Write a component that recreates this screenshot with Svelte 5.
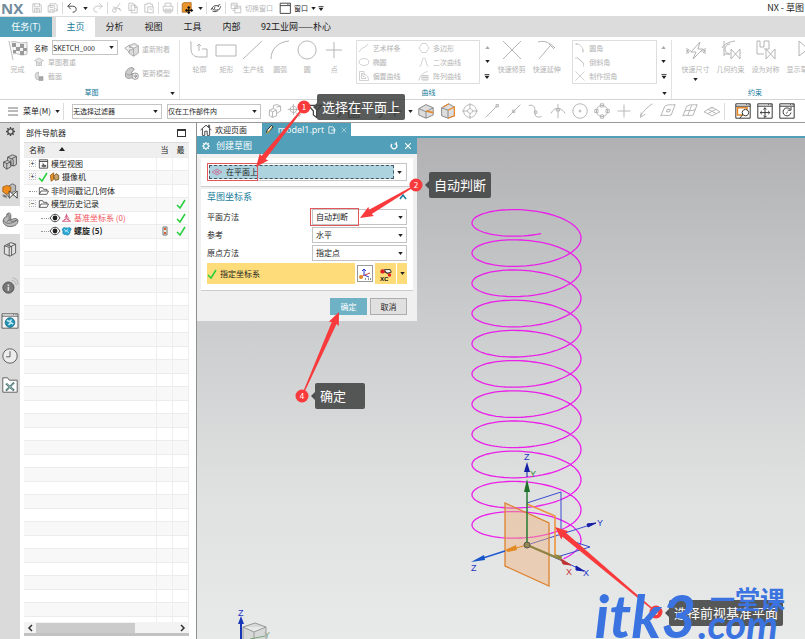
<script lang="ts">
	interface TreeRow {
		label: string;
		level: number;
		kind: string;
		expander?: string;
		checked?: boolean;
		visible?: boolean;
		latest?: boolean;
		mark?: boolean;
	}

	const tabs = ['主页', '分析', '视图', '工具', '内部', '92工业网——朴心'];
	let activeTab = $state('主页');

	const drawTools = [
		{ label: '轮廓', icon: 'profile' },
		{ label: '矩形', icon: 'rect' },
		{ label: '生产线', icon: 'line' },
		{ label: '圆弧', icon: 'arc' },
		{ label: '圆', icon: 'circle' },
		{ label: '点', icon: 'point' }
	];
	const curveTools = [
		{ label: '艺术样条', icon: 'spline' },
		{ label: '多边形', icon: 'polygon' },
		{ label: '椭圆', icon: 'ellipse' },
		{ label: '二次曲线', icon: 'conic' },
		{ label: '偏置曲线', icon: 'offset' },
		{ label: '阵列曲线', icon: 'pattern' }
	];
	const editTools = [
		{ label: '快速修剪', icon: 'trim' },
		{ label: '快速延伸', icon: 'extend' }
	];
	const cornerTools = [
		{ label: '圆角', icon: 'fillet' },
		{ label: '倒斜角', icon: 'chamfer' },
		{ label: '制作拐角', icon: 'corner' }
	];
	const constraintTools = [
		{ label: '快速尺寸', icon: 'dimension' },
		{ label: '几何约束', icon: 'constraint' },
		{ label: '设为对称', icon: 'symmetric' },
		{ label: '显示草图', icon: 'show' }
	];
	const selectionTools = ['solid', 'snap', 'filter', 'undoSel', 'list', 'rotate', 'origin'];
	const snapTools = [
		'target', 'lineEnd', 'lineMid', 'curveEnd', 'intersect', 'center',
		'quadrant', 'point', 'tangent', 'face', 'faceGrid', 'grid'
	];
	const railIcons = ['gear', 'blocks', 'orange', 'part', 'library', 'info', 'web', 'clock', 'toolbox'];

	const rows: TreeRow[] = [
		{ label: '模型视图', level: 0, kind: 'views', expander: '+' },
		{ label: '摄像机', level: 0, kind: 'camera', expander: '+', checked: true },
		{ label: '非时间戳记几何体', level: 0, kind: 'folder' },
		{ label: '模型历史记录', level: 0, kind: 'folder', expander: '−', latest: true },
		{ label: '基准坐标系 (0)', level: 1, kind: 'csys', visible: true, latest: true },
		{ label: '螺旋 (5)', level: 1, kind: 'helix', visible: true, latest: true, mark: true }
	];
	const blankRows = Array.from({ length: 30 });

	let sketchType = $state('在平面上');
	let planeMethod = $state('自动判断');
	let reference = $state('水平');
	let originMethod = $state('指定点');

	// outline icons on a 20 unit grid
	const paths: Record<string, string> = {
		save: 'M3 3h12l2 2v12H3zM6 3v5h8V3M6 17v-6h8v6M8 13h4M8 15h4',
		saveAll: 'M2 6h10v11H2zM5 6V3h10l2 2v10h-4M5 6v3h5M5 17v-4h5v4M14 11l4 3',
		undo: 'M8 2L3 7l5 5M3 7h8c4 0 6 2 6 5s-2 5-6 5',
		redo: 'M12 2l5 5-5 5M17 7H9c-4 0-6 2-6 5s2 5 6 5',
		cut: 'M15 2L7 13M3 8l13 4M5 11a3 3 0 1 0 1 6 3 3 0 0 0-1-6M15 10a2 2 0 1 0 2 4',
		copy: 'M3 2h7l3 3v9H3zM7 5h7l3 3v10H7zM13 5v4h4',
		paste: 'M3 4h4V2h6v2h3v4M3 4v13h4M8 8h9v10H8zM11 12h4',
		print: 'M5 7V2h10v5M2 7h16v8H2zM5 12h10v6H5zM7 15h6',
		eye: 'M2 13c2-7 9-9 13-5M4 15c6 3 12-1 14-8M9 8a3 3 0 1 0 4 4M3 10l4 4M13 6l4-2',
		windows: 'M2 2h10v9H2zM8 7h10v11H8zM2 5h10M8 10h10M4 14h3',
		window: 'M2 2h17v17H2zM2 6h17M14 4h1M16 4h1',
		profile: 'M2 2v7c0 6 4 8 8 8h8v-8h-5M10 11V4M8 6l2-2 2 2M2 2H1',
		rect: 'M0 5h20v11H0z',
		line: 'M0 19L19 1',
		arc: 'M1 19C1 9 8 2 19 1',
		circle: 'M10 1a9 9 0 1 0 .1 0',
		point: 'M10 2v16M2 10h16',
		spline: 'M0 18l4-5c2-5 5-2 8-5l6-6',
		polygon: 'M6 1h8l6 9-6 9H6l-6-9z',
		ellipse: 'M10 3c13 0 13 14 0 14S-3 3 10 3',
		conic: 'M1 19c5 0 4-17 9-17s4 17 9 17',
		offset: 'M1 1h9v6c5 0 9 3 9 12H1zM5 5v10h9c0-3-3-4-6-4V5z',
		pattern: 'M0 19C1 10 7 4 17 1M6 9h12v9H6zM10 8v11M14 8v11M5 13h14',
		trim: 'M1 1l18 18M19 1L1 19',
		extend: 'M1 2c7-2 12 1 17 6M13 6L2 19M12 4l5 5',
		fillet: 'M1 2c10-1 15 7 15 16M1 2h5M16 12v7',
		chamfer: 'M0 2h6l11 10v7M5 2l12 11',
		corner: 'M1 1l18 18M19 1L1 19',
		dimension: 'M1 8v6M19 8v6M1 11h4M15 11h4M3 9l-2 2 2 2M17 9l2 2-2 2M14 2L5 12h5l-3 7 10-10h-5z',
		constraint: 'M1 8C3 4 8 2 14 1M3 1v15M3 14h6M9 4a5 5 0 0 0 0 10M10 9v10l9-10v10z',
		symmetric: 'M1 1h3v6h4V1h5v8H8M1 1v13h7M10 9v10l9-10v10z',
		show: 'M8 1v15l9-7z',
		solid: 'M3 9l5-2 4 2v7l-5 2-4-2zM8 7V3l5-1 4 2v6l-5 3M3 9l4 2 5-2M7 11v7M12 5l5-1',
		snap: 'M8 1v14M1 8h14M8 4a4 4 0 1 0 .1 0M11 12l5 5M14 17l4-4',
		filter: 'M2 3h16l-6 7v8l-4-3v-5z',
		undoSel: 'M4 3v6h6M4 9c4-6 12-4 13 3 0 3-2 5-4 6',
		list: 'M2 4h13v14H2zM5 8h1M8 8h5M5 12h1M8 12h5M5 15h8M2 6h13',
		rotate: 'M2 4l4-2M3 6h10M10 3l3 3-3 3M14 10c7 2 5 8 0 8M14 10l3-2M14 10l2 3',
		origin: 'M10 2v15M2 10h16M8 8h4v4H8z',
		target: 'M10 2a8 8 0 1 0 .1 0M10 7a3 3 0 1 0 .1 0M10 0v7M10 13v7M0 10h7M13 10h7',
		lineEnd: 'M2 18L17 3M15 2h3v3h-3z',
		lineMid: 'M2 18L18 2M8 9h3v3H8z',
		curveEnd: 'M1 3c10-2 7 8 8 12 1 3 5 3 8 2M8 10h3v3H8z',
		intersect: 'M1 13C6 4 14 5 19 13M10 1v18M8 7h4v3H8z',
		center: 'M10 1a9 9 0 1 0 .1 0M9 9h2v2H9z',
		quadrant: 'M10 3a7 7 0 1 0 .1 0M8 1h4v4H8zM8 15h4v4H8zM1 8h4v4H1zM15 8h4v4h-4z',
		tangent: 'M18 1C12 5 6 10 3 17M4 12l-1 6 6-4',
		face: 'M1 16L6 4c4-3 9-1 13-2l-5 13c-4 2-9-1-13 1zM9 8l4 0-1 3-4 0z',
		faceGrid: 'M1 16L6 4c4-3 9-1 13-2l-5 13c-4 2-9-1-13 1zM4 10c5-2 8 1 13-2M12 3L7 16',
		grid: 'M0 11l10-6 10 6-10 5zM5 8l10 5M15 8L5 13M10 5v3',
		gear: 'M9 2h2l1 3 2 1 3-1 1 3-2 2 2 2-1 3-3-1-2 1-1 3H9l-1-3-2-1-3 1-1-3 2-2-2-2 1-3 3 1 2-1zM10 7a3 3 0 1 0 .1 0',
		cog: 'M10 4a6 6 0 1 0 .1 0M10 0v4M10 16v4M0 10h4M16 10h4M3 3l3 3M14 14l3 3M17 3l-3 3M6 14l-3 3',
		home: 'M1 10l9-8 9 8M4 8v11h4v-7h4v7h4V8M14 5V2h2v5',
		refresh: 'M5 5a7 7 0 1 0 10 0M11 5h5V0',
		close: 'M3 3l14 14M17 3L3 17'
	};

	// helix of the model, projected on the view plane
	function helixPath() {
		let d = '';
		const end = Math.PI * 22 + 0.9;
		for (let t = 1.3; t < end; t += 0.08) {
			const x = 526.5 + 54.5 * Math.cos(t);
			const y = 207.8 + 20.3 * Math.sin(t) + (30.2 * t) / (2 * Math.PI);
			d += `${d ? 'L' : 'M'}${x.toFixed(1)} ${y.toFixed(1)}`;
		}
		return d;
	}

	const arrows = [
		{ from: [304, 107], to: [256, 167], n: 1 },
		{ from: [416, 185], to: [360, 218], n: 2 },
		{ from: [302, 396], to: [339, 312], n: 4 },
		{ from: [656, 612], to: [555, 527], n: 3 }
	];

	// tapered shaft with a barbed head
	function arrowPoints(from: number[], to: number[]) {
		const dx = to[0] - from[0];
		const dy = to[1] - from[1];
		const len = Math.hypot(dx, dy);
		const ux = dx / len;
		const uy = dy / len;
		const at = (back: number, side: number) =>
			`${(to[0] - ux * back - uy * side).toFixed(1)},${(to[1] - uy * back + ux * side).toFixed(1)}`;
		return [at(len, 0.6), at(12, 2.6), at(13, 5.5), at(0, 0), at(13, -5.5), at(12, -2.6), at(len, -0.6)].join(' ');
	}
</script>

{#snippet icon(name: string, cls = '')}
	<svg class="icon {cls}" viewBox="0 0 20 20" aria-hidden="true"><path d={paths[name]} /></svg>
{/snippet}

{#snippet caret()}
	<svg class="caret" viewBox="0 0 6 4" aria-hidden="true"><path d="M0 0h6L3 4z" /></svg>
{/snippet}

{#snippet tick()}
	<svg class="tick" viewBox="0 0 10 10" aria-hidden="true"><path d="M1 6l3 3 5-8" /></svg>
{/snippet}

{#snippet scroller()}
	<div class="scroller">
		<svg class="caret faint" viewBox="0 0 6 4"><path d="M0 4h6L3 0z" /></svg>
		{@render caret()}
		<svg class="caret more" viewBox="0 0 6 6"><path d="M0 0h6v1H0zM0 2h6L3 6z" /></svg>
	</div>
{/snippet}

<div class="app">
	<header class="titlebar">
		<span class="logo">NX</span>
		<button aria-label="保存">{@render icon('save')}</button>
		<button aria-label="另存">{@render icon('saveAll')}</button>
		<i class="sep"></i>
		<button aria-label="撤消">{@render icon('undo', 'dark')}</button>
		<span class="drop">{@render caret()}</span>
		<button aria-label="重做">{@render icon('redo')}</button>
		<i class="sep"></i>
		<button aria-label="剪切">{@render icon('cut')}</button>
		<button aria-label="复制">{@render icon('copy')}</button>
		<button aria-label="粘贴">{@render icon('paste')}</button>
		<i class="sep"></i>
		<button aria-label="打印">{@render icon('print')}</button>
		<i class="sep"></i>
		<button aria-label="命令">
			<svg class="icon" viewBox="0 0 20 20">
				<path d="M2 3l3-2h12v12l-3 4H2z" fill="#e9942b" stroke="#a76416" />
				<path d="M13 8v11M8 14h11M11 10l2-2 2 2M11 17l2 2 2-2M10 12l-2 2 2 2M17 12l2 2-2 2" stroke="#111" stroke-width="2" />
			</svg>
		</button>
		<span class="drop">{@render caret()}</span>
		<i class="sep"></i>
		<button aria-label="显示">{@render icon('eye', 'dark')}</button>
		<i class="sep"></i>
		<button class="wide muted">{@render icon('windows')}切换窗口</button>
		<button class="wide window">{@render icon('window', 'dark')}窗口</button>
		<span class="drop">{@render caret()}</span>
		<svg class="caret more" viewBox="0 0 6 6"><path d="M0 0h6v1H0zM0 2h6L3 6z" /></svg>
		<span class="title">NX - 草图</span>
	</header>

	<nav class="tabs">
		<button class="task">任务(T)</button>
		{#each tabs as tab}
			<button class:active={tab === activeTab} onclick={() => (activeTab = tab)}>{tab}</button>
		{/each}
	</nav>

	<section class="ribbon">
		<div class="group sketch">
			<div class="tools">
				<button class="big finish">
					<svg class="icon" viewBox="0 0 20 20">
						<path d="M1 1l4 19M3 2c5-2 8 3 16 0v12c-7 3-9-2-14 0" stroke="#bbb" fill="#f4f4f4" />
						<path d="M4 3h4v4H4zM12 4h4v4h-4zM8 7h4v4H8zM15 8h4v3h-4zM5 10h3v3H5zM12 11h4v4h-4z" fill="#9a9a9a" stroke="none" />
					</svg>
					完成
				</button>
				<div class="stack">
					<div class="name-row">
						<label for="sketch-name">名称</label>
						<span class="combo">
							<select id="sketch-name"><option>SKETCH_000</option></select>
							{@render caret()}
						</span>
					</div>
					<button class="small">
						<svg class="icon" viewBox="0 0 20 20"><path d="M1 7l9-5 9 5-9 5zM5 10v7h10v-7M8 14h5" fill="#e8e8e8" stroke="#aaa" /></svg>草图着重
					</button>
					<button class="small">
						<svg class="icon" viewBox="0 0 20 20"><path d="M9 2a8 8 0 1 0 9 9h-9z" fill="#ddd" stroke="#aaa" /><path d="M10 12h8v7h-8z" fill="#aaa" stroke="#999" /></svg>截面
					</button>
				</div>
				<div class="stack models">
					<button class="medium">
						<svg class="icon" viewBox="0 0 20 20"><path d="M6 6l7-3 5 3v9l-6 4-6-4zM6 6l6 3 6-3M12 9v10" fill="#ddd" stroke="#aaa" /><path d="M1 9l6-4v3h4v3H7v3z" fill="#eee" stroke="#aaa" /></svg>重新附着
					</button>
					<button class="medium">
						<svg class="icon" viewBox="0 0 20 20"><path d="M2 11c0-4 3-7 8-8l3 2-4 5 5 2c-2 5-9 6-12 3z" fill="#ccc" stroke="#999" /><path d="M3 11c2 2 5 2 8 0" stroke="#999" /><circle cx="14" cy="14" r="4" fill="#eee" stroke="#999" /><path d="M12 14h4M14 12l2 2-2 2" stroke="#888" /></svg>更新模型
					</button>
				</div>
			</div>
			<footer>草图<span class="launcher">{@render caret()}</span></footer>
		</div>

		<div class="group curves">
			<div class="tools">
				{#each drawTools as tool}
					<button class="big">{@render icon(tool.icon)}{tool.label}</button>
				{/each}
				<div class="gallery two">
					{#each curveTools as tool}
						<button class="small">{@render icon(tool.icon)}{tool.label}</button>
					{/each}
				</div>
				{@render scroller()}
				{#each editTools as tool}
					<button class="big broad">{@render icon(tool.icon)}{tool.label}</button>
				{/each}
				<div class="gallery">
					{#each cornerTools as tool}
						<button class="small">{@render icon(tool.icon)}{tool.label}</button>
					{/each}
				</div>
				{@render scroller()}
			</div>
			<footer>曲线<span class="launcher">{@render caret()}</span></footer>
		</div>

		<div class="group constraints">
			<div class="tools">
				{#each constraintTools as tool, i}
					<button class="big broad">
						{@render icon(tool.icon)}{tool.label}
						{#if i === 0}{@render caret()}{/if}
					</button>
				{/each}
			</div>
			<footer>约束</footer>
		</div>
	</section>

	<section class="toolbar">
		<button class="menu">
			<svg class="burger" viewBox="0 0 10 9"><path d="M0 1h10M0 4h10M0 8h10" /></svg>菜单(M){@render caret()}
		</button>
		<i class="sep"></i>
		<span class="combo filter">
			<select aria-label="选择过滤器"><option>无选择过滤器</option></select>
			{@render caret()}
		</span>
		<span class="combo scope">
			<select aria-label="选择范围"><option>仅在工作部件内</option></select>
			{@render caret()}
		</span>
		<div class="icons selection">
			{#each selectionTools as name, i}
				<button aria-label={name}>{@render icon(name, i > 1 ? 'dark' : '')}</button>
			{/each}
			<span class="drop">{@render caret()}</span>
		</div>
		<button class="cube" aria-label="实体">
			<svg class="icon" viewBox="0 0 20 20">
				<path d="M1 7l9-5 9 4v9l-9 4-9-4z" fill="#ddd" stroke="#888" />
				<path d="M1 7l9 4 9-5M10 11v8" stroke="#888" /><path d="M10 10l9 2" stroke="#e8872b" stroke-width="2" />
			</svg>
		</button>
		<button class="cube" aria-label="面">
			<svg class="icon" viewBox="0 0 20 20">
				<path d="M2 6l9-5 7 4v11l-8 3-8-3z" fill="#ddd" stroke="#888" />
				<path d="M2 6l8 3v10" stroke="#888" /><path d="M10 9l8-4v11l-8 3M4 5l7-4" stroke="#e8872b" stroke-width="1.5" />
			</svg>
		</button>
		<div class="icons">
			{#each snapTools as name}
				<button aria-label={name}>{@render icon(name)}</button>
			{/each}
		</div>
		<i class="sep"></i>
		<div class="icons views">
			<button aria-label="缩放窗口">
				<svg class="icon" viewBox="0 0 20 20">
					<path d="M1 1h18v18H1zM1 4h18M14 2h1M17 2h1" stroke="#333" /><path d="M3 6h12v9H3z" stroke="#e8872b" stroke-width="2" />
					<path d="M13 8a4 4 0 1 0 .1 0M10 14l-4 5" stroke="#333" fill="#fff" />
				</svg>
			</button>
			<button aria-label="平移">
				<svg class="icon" viewBox="0 0 20 20">
					<path d="M1 1h18v18H1zM1 4h18M14 2h1M17 2h1M10 6v12M4 12h12M8 8l2-2 2 2M8 16l2 2 2-2M6 10l-2 2 2 2M14 10l2 2-2 2" stroke="#333" />
				</svg>
			</button>
			<button aria-label="旋转">
				<svg class="icon" viewBox="0 0 20 20">
					<path d="M1 1h18v18H1zM1 4h18M14 2h1M17 2h1M14 8a5 5 0 1 0 1 4M15 5v4h-4M9 13l2-2" stroke="#333" />
				</svg>
			</button>
		</div>
	</section>

	<main>
		<aside class="rail">
			{#each railIcons as name}
				<button class={name} class:current={name === 'part'} aria-label={name}>
					{#if name === 'gear'}
						{@render icon('cog', 'dark')}
					{:else}
						<svg class="icon" viewBox="0 0 20 20">
							{#if name === 'blocks'}
								<path d="M2 10l5-2 4 2v6l-5 3-4-3zM7 8V4l6-3 5 2v10l-3 2-4-1V7" fill="#c9c9c9" stroke="#444" />
								<path d="M2 10l4 2 5-2M6 12v7M7 4l5 2 6-3M12 6l2 1v8" stroke="#444" />
							{:else if name === 'orange'}
								<path d="M8 4l5-3 4 2v7l-5 2M4 13l4 4 4-2" fill="#bbb" stroke="#555" />
								<path d="M1 5l5-2 5 2v6l-5 3-5-3z" fill="#ef8c1c" stroke="#a35c10" />
								<path d="M1 14l5 2v3l-5-2z" fill="#666" /><path d="M9 10v9l10-9v9z" fill="#fff" stroke="#222" />
							{:else if name === 'part'}
								<path d="M2 9c1-3 3-3 4-3V3c2-3 5-2 5 1v6c5-3 9-2 9 1 0 5-6 8-12 7-5-1-8-5-6-9z" fill="#b9b9b9" stroke="#555" />
								<path d="M6 3c3-1 3 2 3 7l-3 2M2 10c1 5 9 6 17 0M9 10l4 2 6-2" stroke="#666" />
							{:else if name === 'library'}
								<path d="M3 6l8-4 6 2v11l-7 4-7-3z" fill="#e2e2e2" stroke="#444" />
								<path d="M3 6l6 2 8-4M9 8v11M6 5l6 2v11M9 3v3" stroke="#444" />
							{:else if name === 'info'}
								<circle cx="8" cy="12" r="7" fill="#777" stroke="#444" />
								<path d="M8 8v2M8 11v5" stroke="#ddd" stroke-width="2" /><path d="M12 3c4 0 5 3 6 6M13 0c5 0 7 4 7 8" stroke="#aaa" />
							{:else if name === 'web'}
								<path d="M0 1h20v18H0zM0 4h20M14 2h1M17 2h1" fill="#f4f4f4" stroke="#444" />
								<circle cx="10" cy="12" r="6" fill="#2492b4" stroke="#146983" />
								<path d="M6 9l4 2 2-3M8 15l3-3 3 2" stroke="#bfe9f3" stroke-width="2" />
							{:else if name === 'clock'}
								<circle cx="10" cy="10" r="9" fill="#ececec" stroke="#444" /><path d="M10 4v7H5" stroke="#444" />
							{:else}
								<path d="M1 1h6l2 3h10v15H1z" fill="#fff" stroke="#444" />
								<path d="M5 8l10 9M15 7L5 17" stroke="#3b6967" stroke-width="2.5" /><path d="M5 8l9 8M14 8l-8 8" stroke="#b9d6d1" />
							{/if}
						</svg>
					{/if}
				</button>
			{/each}
		</aside>

		<section class="navigator">
			<h2>部件导航器<button class="max" aria-label="最大化"></button></h2>
			<div class="tree">
				<table>
					<thead>
						<tr>
							<th>名称<svg class="sort" viewBox="0 0 6 4"><path d="M0 4h6L3 0z" /></svg></th>
							<th class="col">当</th>
							<th class="col">最</th>
						</tr>
					</thead>
					<tbody>
						{#each rows as row}
							<tr>
								<td>
									<div class="node" class:child={row.level === 1}>
										<span class="expander" class:boxed={row.expander}>{row.expander ?? ''}</span>
										{#if row.checked}{@render tick()}{/if}
										{#if row.visible}
											<svg class="vis" viewBox="0 0 10 8"><path d="M0 4c3-5 7-5 10 0-3 5-7 5-10 0z" fill="#fff" stroke="#444" /><circle cx="5" cy="4" r="2.4" fill="#222" /></svg>
										{/if}
										<svg class="kind" viewBox="0 0 12 12">
											{#if row.kind === 'views'}
												<path d="M1 1h10v10H1zM1 3h10" fill="#fff" stroke="#333" /><path d="M5 4v3c-3 1-1 3 2 3 3 0 4-3 0-3z" fill="#666" />
											{:else if row.kind === 'camera'}
												<path d="M1 4l4-3v8l-3 2z" fill="#e9942b" stroke="#9a5a10" /><path d="M5 5l3-3 3 2v5l-4 1z" fill="#c8a36d" stroke="#6b4a1d" />
											{:else if row.kind === 'folder'}
												<path d="M1 10V2h4l1 2h4v2M1 10l2-4h9l-2 4z" fill="#fff" stroke="#444" />
											{:else if row.kind === 'csys'}
												<path d="M6 1v5L1 10h10L6 6M4 6l2-4 3 5M3 9l3-2 3 2" fill="none" stroke="#d2557c" />
											{:else}
												<path d="M1 4c2-4 5 0 8-2 3 0 3 3 1 4 1 4-3 6-5 4-3 1-4-2-3-3z" fill="#2ba9d6" stroke="#1280ab" /><path d="M3 4l6 4M4 7l4-3" stroke="#c4efff" fill="none" />
											{/if}
										</svg>
										<span class="text {row.kind}">{row.label}</span>
									</div>
								</td>
								<td class="col">
									{#if row.mark}
										<svg class="mark" viewBox="0 0 6 10"><path d="M1 1h4v8H1z" fill="#eee" stroke="#777" /><path d="M3 2v2M3 6v2" stroke="#d6622a" stroke-width="2" /></svg>
									{/if}
								</td>
								<td class="col">{#if row.latest}{@render tick()}{/if}</td>
							</tr>
						{/each}
						{#each blankRows as _}
							<tr><td></td><td class="col"></td><td class="col"></td></tr>
						{/each}
					</tbody>
				</table>
			</div>
			<div class="hscroll">
				<svg viewBox="0 0 6 8"><path d="M5 1L2 4l3 3" /></svg>
				<span class="track"><span class="thumb"></span></span>
				<svg viewBox="0 0 6 8"><path d="M1 1l3 3-3 3" /></svg>
			</div>
		</section>

		<section class="workspace">
			<div class="doc-tabs">
				<button class="welcome">{@render icon('home', 'dark')}欢迎页面</button>
				<button class="model">
					<svg class="icon" viewBox="0 0 20 20"><path d="M3 17l2-6L14 1l4 3-9 11z" fill="#eee" stroke="#222" stroke-width="2" /><path d="M3 18l4-1 8-12" stroke="#e8b32b" stroke-width="2" /></svg>
					<span>model1.prt</span>
					<svg class="doc" viewBox="0 0 10 10"><path d="M1 1h5l2 2v6H1zM4 5h5M7 3l2 2-2 2" /></svg>
					<svg class="doc x" viewBox="0 0 10 10"><path d="M2 2l6 6M8 2L2 8" /></svg>
				</button>
			</div>

			<div class="viewport">
				<svg class="scene" aria-hidden="true">
					<g transform="translate(-197 -138)" fill="none">
						<path d={helixPath()} stroke="#ea1fea" stroke-width="1.3" />
						<path d="M527 503L561 492V534M527 545L590 525M527 545L580 569" stroke="#3a4bd0" />
						<path d="M566 539L590 547L557 557" stroke="#3a4bd0" />
						<path d="M505 503L549 523V586L505 566z" fill="#efb078" fill-opacity=".45" stroke="#dd822f" stroke-width="1.3" />
						<path d="M527 504L555 516V557" stroke="#ee943f" stroke-width="1.6" />
						<path d="M527 545V490" stroke="#267a32" stroke-width="1.5" />
						<path d="M527 477V467" stroke="#1620a8" />
						<path d="M524 492l3-13 3 13z" fill="#1c7228" />
						<path d="M524 472l3-10 3 10z" fill="#141ea6" />
						<path d="M505 551L480 559" stroke="#1e5ad2" stroke-width="1.5" />
						<path d="M471 562l13-7 1 5z" fill="#1754c8" />
						<path d="M505 550l11-5 1 5-9 2z" fill="#e18a23" /><path d="M516 548L527 545" stroke="#e18a23" />
						<path d="M527 545L560 559" stroke="#8f8340" stroke-width="2" />
						<path d="M554 554l8 2-1 5z" fill="#8f8340" />
						<path d="M561 559l10 6-8-1z" fill="#bf3434" stroke="#bf3434" />
						<path d="M576 566l8 5-8-1z" fill="#141ea6" stroke="#141ea6" />
						<path d="M587 524l9-1-8 4z" fill="#141ea6" stroke="#141ea6" />
						<circle cx="527" cy="545" r="3" fill="#94894f" stroke="#555" />
						<g class="axis">
							<text x="524" y="460" fill="#2434c8">Z</text>
							<text x="530" y="477" fill="#2c8635">Y</text>
							<text x="597" y="526" fill="#2434c8">Y</text>
							<text x="471" y="571" fill="#2434c8">Z</text>
							<text x="566" y="575" fill="#c43434">X</text>
							<text x="583" y="576" fill="#2434c8">X</text>
							<text x="238" y="616" fill="#2434c8">Z</text>
							<text x="264" y="638" fill="#7da67f">Y</text>
						</g>
						<path d="M241 645V622" stroke="#1737b8" stroke-width="2" /><path d="M238 624l3-8 3 8z" fill="#1737b8" />
						<path d="M243 627l12-4 11 4v18h-23zM243 627l11 5 12-5M254 632v13" fill="#ccc" fill-opacity=".6" stroke="#999" />
						<path d="M250 639l15-3" stroke="#7da67f" />
					</g>
				</svg>

				<form class="dialog" onsubmit={(e) => e.preventDefault()}>
					<header>
						{@render icon('cog')}
						<span>创建草图</span>
						<button type="button" aria-label="重置">{@render icon('refresh')}</button>
						<button type="button" aria-label="关闭">{@render icon('close')}</button>
					</header>
					<div class="card type">
						<span class="combo">
							<svg class="plane" viewBox="0 0 10 8"><path d="M0 4l5-3 5 3-5 3zM3 4l2-1 2 1-2 1z" /></svg>
							<select aria-label="草图类型" bind:value={sketchType}><option>在平面上</option></select>
							<span class="arrow">{@render caret()}</span>
						</span>
					</div>
					<div class="card">
						<h3>草图坐标系<svg viewBox="0 0 8 6"><path d="M1 5l3-4 3 4" /></svg></h3>
						<div class="field">
							<label for="plane-method">平面方法</label>
							<span class="combo">
								<select id="plane-method" bind:value={planeMethod}><option>自动判断</option></select>
								{@render caret()}
							</span>
						</div>
						<div class="field">
							<label for="reference">参考</label>
							<span class="combo">
								<select id="reference" bind:value={reference}><option>水平</option></select>
								{@render caret()}
							</span>
						</div>
						<div class="field">
							<label for="origin-method">原点方法</label>
							<span class="combo">
								<select id="origin-method" bind:value={originMethod}><option>指定点</option></select>
								{@render caret()}
							</span>
						</div>
						<div class="csys-row">
							<span class="specify">{@render tick()}指定坐标系</span>
							<button type="button" class="csys-dialog" aria-label="坐标系对话框">
								<svg viewBox="0 0 14 14"><path d="M6 2v6l5 2M4 4l2-2 2 2" stroke="#2434c8" /><path d="M6 8L2 11M7 8l5-2" stroke="#d23a3a" /><circle cx="3" cy="10" r="2" fill="#e18a23" /><path d="M7 12h1M10 12h1M12 12h1" stroke="#222" /></svg>
							</button>
							<button type="button" class="infer" aria-label="自动判断">
								<svg viewBox="0 0 16 16"><path d="M3 4l10 5M12 3L3 6" stroke="#222" /><path d="M6 3h7l1 3-5 1z" fill="#fff" stroke="#222" /><circle cx="4" cy="5" r="2.5" fill="#d22" /><circle cx="12" cy="9" r="2" fill="#d22" /><text x="1" y="16">XC</text></svg>
							</button>
							<button type="button" class="infer-drop" aria-label="更多">{@render caret()}</button>
						</div>
					</div>
					<div class="actions">
						<button type="submit" class="ok">确定</button>
						<button type="button">取消</button>
					</div>
				</form>
			</div>
		</section>
	</main>

	<div class="callout plane-tip">选择在平面上</div>
	<div class="callout method-tip">自动判断</div>
	<div class="callout ok-tip">确定</div>
	<div class="callout datum-tip">选择前视基准平面</div>

	<svg class="annotations" aria-hidden="true">
		<rect x="207.5" y="163.5" width="50" height="17" />
		<rect x="310.5" y="208.5" width="48" height="17" />
		{#each arrows as a}
			<polygon points={arrowPoints(a.from, a.to)} />
			<circle cx={a.from[0]} cy={a.from[1]} r="6.5" />
			<text x={a.from[0]} y={a.from[1] + 3}>{a.n}</text>
		{/each}
	</svg>

	<div class="watermark">
		<span class="site">itk3</span>
		<span class="rest"><span class="cn">一堂课</span><span class="com">.com</span></span>
	</div>
</div>

<style>
	:global(body) {
		margin: 0;
		background: #fff;
	}

	.app {
		position: relative;
		display: flex;
		flex-direction: column;
		height: 100vh;
		overflow: hidden;
		font-family: 'Noto Sans CJK SC', 'Noto Sans', sans-serif;
		font-size: 8px;
		line-height: 12px;
		color: #222;
	}

	.app * {
		box-sizing: border-box;
	}

	button,
	select {
		font: inherit;
		color: inherit;
		border: none;
		background: none;
		padding: 0;
		margin: 0;
	}

	button {
		display: flex;
		align-items: center;
		justify-content: center;
		white-space: nowrap;
	}

	svg {
		flex-shrink: 0;
		overflow: visible;
	}

	.icon {
		width: 12px;
		height: 12px;
		fill: none;
		stroke: #b4b4b4;
		stroke-width: 1.2;
	}

	.icon.dark {
		stroke: #444;
		stroke-width: 1.6;
	}

	.caret {
		width: 5px;
		height: 3px;
		fill: #222;
	}

	.caret.more {
		width: 6px;
		height: 5px;
	}

	.tick {
		width: 10px;
		height: 10px;
		fill: none;
		stroke: #27cf3b;
		stroke-width: 1.5;
	}

	.sep {
		width: 1px;
		height: 12px;
		margin: 0 1px;
		background: #dcdcdc;
	}

	.combo {
		position: relative;
		display: flex;
		align-items: center;
		height: 15px;
		border: 1px solid #c4c4c4;
		background: #fff;
	}

	.combo select {
		appearance: none;
		width: 100%;
		height: 100%;
		outline: none;
	}

	.combo > .caret {
		position: absolute;
		right: 3px;
		pointer-events: none;
	}

	/* title bar */
	.titlebar {
		display: flex;
		align-items: center;
		height: 16px;
		flex-shrink: 0;
		font-size: 7px;
	}

	.titlebar button {
		width: 16px;
		height: 16px;
	}

	.logo {
		width: 29px;
		padding-left: 1px;
		font: bold 15px/16px 'Open Sans', sans-serif;
		color: #738c9d;
	}

	.drop {
		display: flex;
		align-items: center;
		justify-content: center;
		width: 10px;
	}

	.titlebar .wide {
		width: auto;
		gap: 3px;
		margin-left: 3px;
	}

	.titlebar .window {
		margin-left: 6px;
	}

	.muted {
		color: #b4b4b4;
	}

	.title {
		margin-left: auto;
		padding-right: 1px;
		font-size: 9px;
	}

	/* ribbon tabs */
	.tabs {
		display: flex;
		height: 21px;
		flex-shrink: 0;
		padding-top: 1px;
		background: #dcdcdc;
		font-size: 9px;
	}

	.tabs button {
		min-width: 39px;
		padding: 0 10px;
	}

	.tabs .task {
		width: 52px;
		margin-right: 4px;
		background: #519fb8;
		color: #fff;
	}

	.tabs .active {
		background: #fff;
		color: #167a9a;
	}

	/* ribbon */
	.ribbon {
		display: flex;
		height: 63px;
		flex-shrink: 0;
		overflow: hidden;
		padding-top: 3px;
		border-bottom: 1px solid #d4d4d4;
		font-size: 7px;
		line-height: 10px;
	}

	.group {
		display: flex;
		flex-direction: column;
		flex-shrink: 0;
		border-right: 1px solid #e2e2e2;
	}

	.tools {
		display: flex;
		flex: 1;
		align-items: flex-start;
	}

	.group footer {
		position: relative;
		height: 12px;
		text-align: center;
		color: #167a9a;
	}

	.launcher {
		position: absolute;
		right: 4px;
		top: 0;
	}

	.sketch {
		width: 180px;
		padding-left: 4px;
	}

	.curves {
		width: 492px;
		padding-left: 6px;
	}

	.constraints {
		width: 160px;
		padding-left: 6px;
		border-right: none;
	}

	.big,
	.small,
	.medium {
		color: #b4b4b4;
	}

	.big {
		flex-direction: column;
		gap: 4px;
		width: 27px;
	}

	.big .icon {
		width: 20px;
		height: 20px;
		stroke-width: 1;
	}

	.big.broad {
		width: 35px;
	}

	.finish {
		margin-right: 3px;
	}

	.stack {
		display: flex;
		flex-direction: column;
		align-items: flex-start;
		width: 84px;
	}

	.name-row {
		display: flex;
		align-items: center;
		width: 84px;
		gap: 4px;
	}

	.name-row .combo {
		flex: 1;
	}

	.small {
		height: 14px;
		gap: 4px;
	}

	.small .icon {
		width: 10px;
		height: 10px;
	}

	.models {
		width: 54px;
		margin-left: 6px;
		gap: 6px;
	}

	.medium {
		height: 18px;
		gap: 2px;
	}

	.medium .icon {
		width: 16px;
		height: 16px;
	}

	.gallery {
		display: grid;
		grid-template-columns: 1fr;
		width: 85px;
		margin-left: 8px;
		padding-left: 2px;
		border: 1px solid #dedede;
	}

	.gallery.two {
		grid-template-columns: 1fr 1fr;
		width: 125px;
	}

	.gallery .small {
		justify-content: flex-start;
	}

	.scroller {
		display: flex;
		flex-direction: column;
		align-items: center;
		justify-content: space-around;
		width: 14px;
		height: 44px;
	}

	.faint {
		fill: #aaa;
	}

	/* selection toolbar */
	.toolbar {
		display: flex;
		align-items: center;
		height: 23px;
		flex-shrink: 0;
		padding-left: 8px;
		border-bottom: 1px solid #999;
		font-size: 7px;
	}

	.toolbar .sep {
		height: 17px;
	}

	.menu {
		width: 54px;
		gap: 5px;
		justify-content: flex-start;
		font-size: 8px;
	}

	.menu .caret {
		margin-left: -1px;
	}

	.burger {
		width: 10px;
		height: 9px;
		stroke: #777;
	}

	.toolbar .filter {
		width: 90px;
		margin-left: 7px;
	}

	.toolbar .scope {
		width: 94px;
		margin: 0 4px 0 5px;
	}

	.icons {
		display: flex;
	}

	.toolbar .icons button,
	.cube {
		width: 22px;
		height: 20px;
	}

	.toolbar .selection button {
		width: 20px;
	}

	.toolbar .icon {
		width: 16px;
		height: 16px;
	}

	.views {
		margin-left: 6px;
	}

	/* body */
	main {
		display: flex;
		flex: 1;
		min-height: 0;
	}

	.rail {
		width: 20px;
		flex-shrink: 0;
		background: #dadada;
	}

	.rail button {
		width: 20px;
		height: 28px;
		margin-top: 1px;
	}

	.rail .icon {
		width: 16px;
		height: 16px;
		stroke-width: 1;
	}

	.rail .gear {
		height: 16px;
		margin-top: 0;
	}

	.rail .gear .icon {
		width: 9px;
		height: 9px;
		stroke-width: 3;
	}

	.rail .blocks,
	.rail .info {
		margin-top: 9px;
	}

	.rail .web,
	.rail .clock {
		margin-top: 7px;
	}

	.rail .current {
		background: #fff;
	}

	.navigator {
		display: flex;
		flex-direction: column;
		width: 177px;
		flex-shrink: 0;
		padding: 0 7px 3px 4px;
		border-right: 1px solid #8f8f8f;
	}

	h2,
	h3 {
		display: flex;
		align-items: center;
		justify-content: space-between;
		margin: 0;
		font-weight: normal;
	}

	h2 {
		height: 19px;
		padding: 0 3px 0 2px;
		font-size: 8px;
	}

	.max {
		width: 9px;
		height: 8px;
		border: 1px solid #333;
		border-top-width: 2px;
	}

	.tree {
		flex: 1;
		min-height: 0;
		overflow: hidden;
		border-top: 1px solid #ddd;
	}

	table {
		width: 100%;
		table-layout: fixed;
		border-collapse: collapse;
	}

	th,
	td {
		padding: 0;
		height: 13px;
		line-height: 12px;
		font-weight: normal;
		text-align: left;
		border-right: 1px solid #eee;
		border-bottom: 1px solid #ececec;
	}

	th {
		height: 14px;
		padding-left: 5px;
		background: #efefef;
	}

	.sort {
		width: 6px;
		height: 4px;
		margin: 0 0 2px 14px;
		fill: #222;
	}

	.col {
		width: 16px;
		padding: 0;
		text-align: center;
	}

	tbody tr:nth-child(even) {
		background: #f8f8f8;
	}

	tbody tr:nth-child(even) td {
		height: 14px;
	}

	td .tick,
	.mark {
		display: block;
		margin: 0 auto;
	}

	.mark {
		width: 6px;
		height: 10px;
	}

	.node {
		display: flex;
		align-items: center;
		height: 12px;
		gap: 1px;
		padding-left: 5px;
		white-space: nowrap;
	}

	.node .tick {
		margin: 0;
	}

	.node.child {
		padding-left: 17px;
	}

	.expander {
		width: 8px;
		height: 5px;
		border-bottom: 1px dotted #999;
		font-size: 7px;
		line-height: 5px;
		text-align: center;
		align-self: flex-start;
		margin-top: 2px;
	}

	.expander.boxed {
		width: 7px;
		height: 7px;
		margin-right: 1px;
		border: 1px dotted #bbb;
	}

	.kind {
		width: 11px;
		height: 10px;
	}

	.vis {
		width: 10px;
		height: 8px;
	}

	.text {
		margin-left: 1px;
	}

	.text.csys {
		color: #f0525a;
	}

	.text.helix {
		font-weight: bold;
	}

	.hscroll {
		display: flex;
		align-items: center;
		height: 14px;
		padding: 0 3px;
		gap: 3px;
		background: #f3f3f3;
		border-bottom: 3px solid #c2c2c2;
	}

	.hscroll svg {
		width: 6px;
		height: 8px;
		fill: none;
		stroke: #333;
		stroke-width: 1.5;
	}

	.track {
		flex: 1;
		height: 10px;
	}

	.thumb {
		display: block;
		width: 70%;
		height: 100%;
		background: #cbcbcb;
	}

	/* documents */
	.workspace {
		display: flex;
		flex-direction: column;
		flex: 1;
		min-width: 0;
	}

	.doc-tabs {
		display: flex;
		height: 15px;
		padding-left: 3px;
		border-bottom: 2px solid #519fb8;
	}

	.doc-tabs button {
		gap: 3px;
	}

	.welcome {
		width: 62px;
		justify-content: flex-start;
	}

	.doc-tabs .model {
		width: 89px;
		gap: 4px;
		background: #519fb8;
		color: #fff;
		font-family: 'Open Sans', sans-serif;
		font-size: 9px;
	}

	.doc-tabs .model .icon {
		width: 9px;
		height: 9px;
	}

	.doc {
		width: 8px;
		height: 8px;
		fill: none;
		stroke: #fff;
	}

	.doc.x {
		stroke: #b5d3dd;
	}

	.viewport {
		position: relative;
		flex: 1;
		min-height: 0;
		background: linear-gradient(#b1b1b3, #c9cbcc 35%, #dfe1e1 70%, #e8eaea);
	}

	.scene {
		position: absolute;
		inset: 0;
		width: 100%;
		height: 100%;
		overflow: hidden;
	}

	.axis {
		font-family: 'Liberation Sans', sans-serif;
		font-size: 9px;
	}

	.dialog {
		position: relative;
		width: 220px;
		padding: 0 4px 6px;
		background: #f0f0f0;
	}

	.dialog header {
		display: flex;
		align-items: center;
		gap: 6px;
		height: 16px;
		margin: 0 -4px 4px;
		padding: 0 5px;
		background: #519fb8;
		color: #fff;
		font-size: 9px;
	}

	.dialog header span {
		flex: 1;
	}

	.dialog header .icon {
		width: 8px;
		height: 8px;
		stroke: #fff;
		stroke-width: 3;
	}

	.card {
		margin-bottom: 2px;
		padding: 0 6px 6px;
		background: #fff;
		border-bottom: 1px solid #ccc;
	}

	.card.type {
		padding: 5px 6px;
	}

	.card.type .combo {
		height: 18px;
		padding: 1px;
	}

	.card.type select {
		padding-left: 16px;
		background: #acd3de;
		border: 1px dashed #456;
	}

	.plane {
		position: absolute;
		left: 4px;
		width: 10px;
		height: 8px;
		fill: none;
		stroke: #c67aa2;
	}

	.arrow {
		display: flex;
		align-items: center;
		padding: 0 3px;
	}

	h3 {
		height: 15px;
		margin-bottom: 4px;
		font-size: 9px;
		color: #167a9a;
	}

	h3 svg {
		width: 8px;
		height: 6px;
		fill: none;
		stroke: #167a9a;
		stroke-width: 1.5;
	}

	.field {
		display: flex;
		align-items: center;
		justify-content: space-between;
		height: 18px;
	}

	.field .combo {
		width: 95px;
		height: 16px;
	}

	.field select {
		padding-left: 3px;
	}

	.csys-row {
		display: flex;
		height: 21px;
		margin-top: 1px;
	}

	.specify {
		display: flex;
		align-items: center;
		gap: 3px;
		flex: 1;
		background: #fedc79;
	}

	.csys-dialog {
		width: 16px;
		height: 17px;
		margin: 2px;
		border: 1px solid #999;
	}

	.csys-row svg:not(.tick, .caret) {
		width: 14px;
		height: 14px;
		fill: none;
	}

	.csys-row text {
		font: bold 7px 'Liberation Sans', sans-serif;
		fill: #111;
	}

	.infer {
		width: 21px;
		background: #fedc79;
	}

	.infer-drop {
		width: 11px;
		border-left: 1px solid #fff;
		background: #fedc79;
	}

	.actions {
		display: flex;
		justify-content: flex-end;
		gap: 3px;
		padding: 5px 6px 0;
	}

	.actions button {
		width: 37px;
		height: 17px;
		border: 1px solid #adadad;
		background: #e0e0e0;
	}

	.actions .ok {
		border-color: #6fb1c5;
		background: #6fb1c5;
		color: #fff;
	}

	/* tutorial notes over the window */
	.annotations {
		position: absolute;
		inset: 0;
		width: 100%;
		height: 100%;
		overflow: hidden;
		pointer-events: none;
		fill: #f83a3c;
	}

	.annotations rect {
		fill: none;
		stroke: #e2575c;
	}

	.annotations text {
		fill: #fff;
		font-size: 8px;
		text-anchor: middle;
	}

	.callout {
		position: absolute;
		height: 26px;
		padding: 0 5px;
		border-radius: 2px;
		background: rgba(64, 65, 66, 0.87);
		color: #fff;
		font-size: 13px;
		line-height: 25px;
		white-space: nowrap;
	}

	.callout::before {
		content: '';
		position: absolute;
		left: -4px;
		top: 9px;
		border: 4px solid transparent;
		border-left: none;
		border-right-color: #4c4d4e;
	}

	.plane-tip {
		left: 317px;
		top: 94px;
	}

	.method-tip {
		left: 429px;
		top: 172px;
	}

	.ok-tip {
		left: 315px;
		top: 383px;
		width: 50px;
	}

	.datum-tip {
		left: 669px;
		top: 600px;
	}

	.watermark {
		position: absolute;
		right: 20px;
		bottom: 0;
		display: flex;
		align-items: flex-end;
		gap: 2px;
		color: #3b74e0;
		font-family: Lato, 'Noto Sans CJK SC', sans-serif;
		font-weight: bold;
		pointer-events: none;
	}

	.site {
		font-size: 60px;
		line-height: 48px;
		font-style: italic;
	}

	.rest {
		display: flex;
		flex-direction: column;
	}

	.cn {
		font-size: 25px;
		line-height: 20px;
		padding-left: 12px;
	}

	.com {
		font-size: 40px;
		line-height: 30px;
		font-style: italic;
	}
</style>
